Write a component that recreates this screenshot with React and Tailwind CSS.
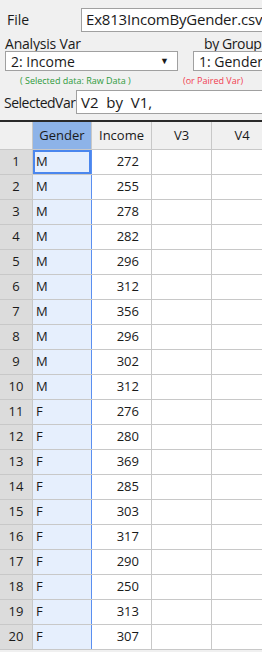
import React from 'react';

const ROWS = [
  ['M', 272], ['M', 255], ['M', 278], ['M', 282], ['M', 296],
  ['M', 312], ['M', 356], ['M', 296], ['M', 302], ['M', 312],
  ['F', 276], ['F', 280], ['F', 369], ['F', 285], ['F', 303],
  ['F', 317], ['F', 290], ['F', 250], ['F', 313], ['F', 307],
];

const font = { fontFamily: '"Open Sans", "Noto Sans", sans-serif' };

export default function App() {
  return (
    <div className="w-[262px] h-[652px] overflow-hidden bg-[#f0f0f0] text-[#1a1a1a]" style={font}>
      {/* top form */}
      <div className="h-[120px] overflow-hidden">
        <div className="flex items-center h-[36px] pt-[3px]">
          <span className="w-[81px] shrink-0 pl-[7px] text-[14px]">File</span>
          <div className="w-[200px] shrink-0 h-[24px] bg-white border border-[#a0a0a0] border-r-0 flex items-center pl-[4px] text-[15px] tracking-[-0.2px] whitespace-nowrap overflow-hidden">
            Ex813IncomByGender.csv
          </div>
        </div>
        <div className="flex h-[15px] items-center text-[14px] leading-[15px] whitespace-nowrap">
          <span className="pl-[5px] w-[204px] shrink-0 tracking-[-0.2px]">Analysis Var</span>
          <span className="tracking-[-0.4px]">by Group</span>
        </div>
        <div className="flex h-[20px]">
          <div className="ml-[5px] w-[173px] shrink-0 h-[20px] bg-white border border-[#a0a0a0] flex items-center justify-between pl-[5px] pr-[8px] text-[14px]">
            <span>2: Income</span>
            <span className="text-[9px]">▼</span>
          </div>
          <div className="ml-[15px] w-[80px] shrink-0 h-[20px] bg-white border border-[#a0a0a0] border-r-0 flex items-center pl-[5px] text-[14px] whitespace-nowrap overflow-hidden">
            1: Gender
          </div>
        </div>
        <div className="flex h-[19px] items-center text-[9px] whitespace-nowrap">
          <span className="pl-[20px] w-[183px] shrink-0 text-[#2e9a3c]">( Selected data: Raw Data )</span>
          <span className="text-[#f04050]">(or Paired Var)</span>
        </div>
        <div className="flex items-center h-[24px]">
          <span className="w-[76px] shrink-0 pl-[4px] text-[14px] tracking-[-0.5px] whitespace-nowrap">SelectedVar</span>
          <div className="w-[190px] shrink-0 h-[24px] bg-white border border-[#a0a0a0] border-r-0 flex items-center pl-[4px] text-[15px] whitespace-pre">
            V2  by  V1,
          </div>
        </div>
      </div>
      <div className="h-[2px] bg-[#2a2a2a]" />

      {/* grid */}
      <div className="text-[13px] w-[272px]">
        <div className="flex h-[28px] bg-[#f0f0f0] border-b border-[#c8c8c8]">
          <div className="w-[33px] shrink-0 border-r border-[#c8c8c8]" />
          <div className="w-[59px] shrink-0 bg-[#8db3e8] border-r border-[#c8c8c8] flex items-center justify-center">Gender</div>
          <div className="w-[60px] shrink-0 border-r border-[#c8c8c8] flex items-center justify-center">Income</div>
          <div className="w-[60px] shrink-0 border-r border-[#c8c8c8] flex items-center justify-center">V3</div>
          <div className="w-[60px] shrink-0 flex items-center justify-center">V4</div>
        </div>
        {ROWS.map(([g, v], i) => (
          <div key={i} className="flex h-[25px] bg-white border-b border-[#c8c8c8]">
            <div className="w-[33px] shrink-0 bg-[#dcdcdc] border-r border-[#c8c8c8] flex items-center justify-center">{i + 1}</div>
            <div className={`w-[59px] shrink-0 bg-[#e6effd] border-r border-[#5a8ff0] flex items-center pl-[3px] ${i === 0 ? 'shadow-[inset_0_0_0_2px_#4a86ee]' : ''}`}>{g}</div>
            <div className="w-[60px] shrink-0 border-r border-[#c8c8c8] flex items-center justify-end pr-[12px]">{v}</div>
            <div className="w-[60px] shrink-0 border-r border-[#c8c8c8]" />
            <div className="w-[60px] shrink-0" />
          </div>
        ))}
      </div>
    </div>
  );
}
